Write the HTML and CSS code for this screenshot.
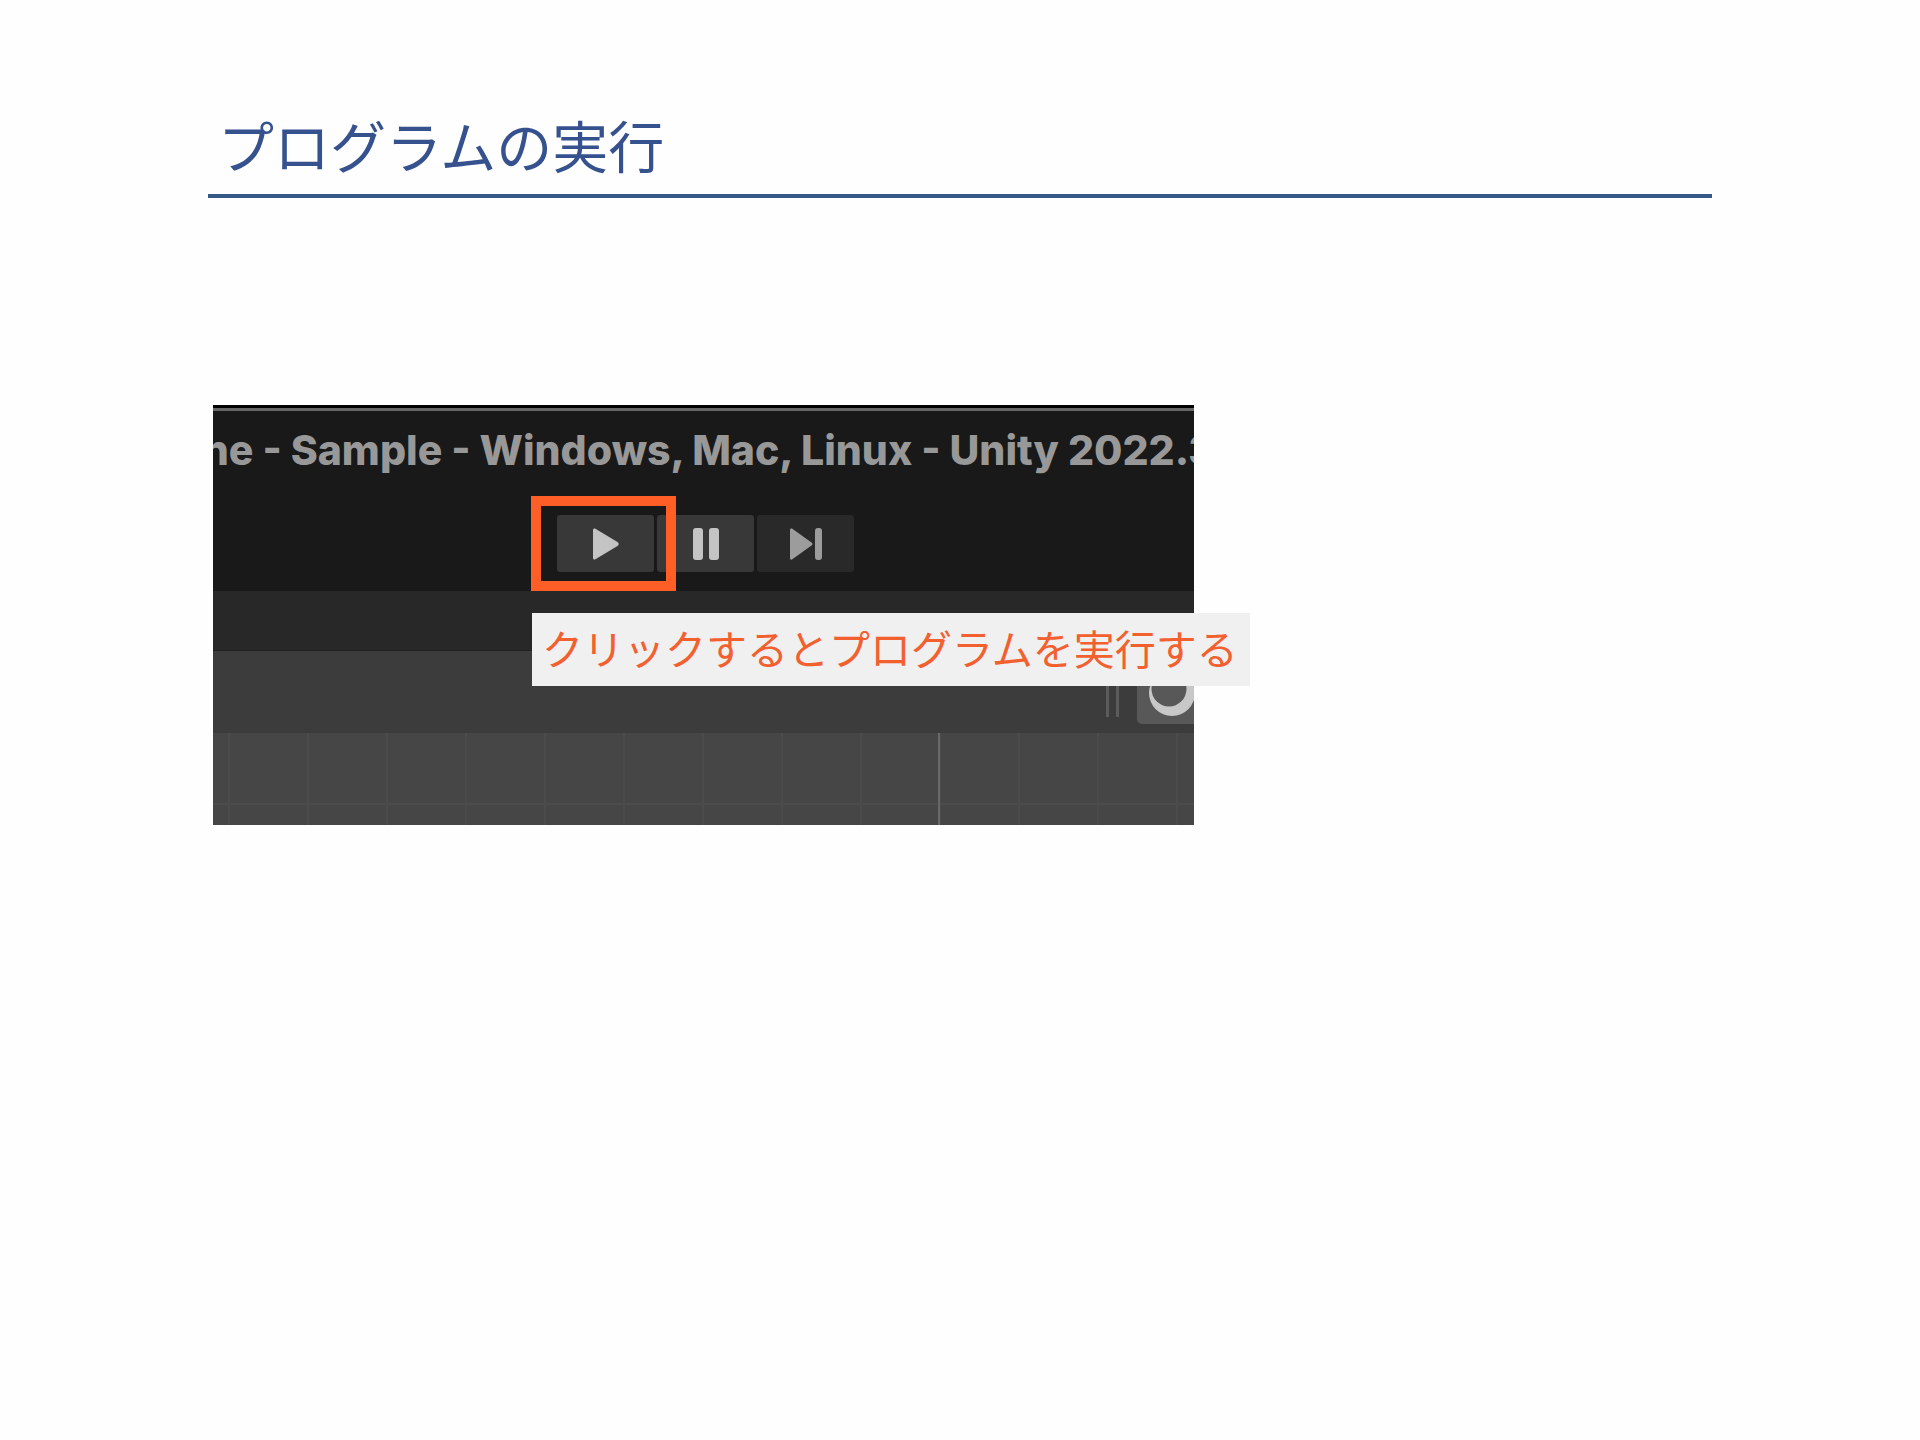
FILE: index.html
```html
<!DOCTYPE html>
<html lang="ja">
<head>
<meta charset="utf-8">
<meta name="viewport" content="width=device-width, initial-scale=1">
<title>プログラムの実行</title>
<link rel="stylesheet" href="styles.css">
</head>
<body>
<main class="slide">
  <h1 class="slide-title">プログラムの実行</h1>
  <figure class="shot">
    <div class="editor">
      <div class="window-title"><span>ne - Sample - Windows, Mac, Linux - Unity 2022.3</span></div>
      <div class="toolbar">
        <div class="play-wrap">
          <button class="tool" type="button" aria-label="Play">
            <svg width="28" height="32" viewBox="0 0 28 32"><path d="M1 2Q1 0 3 0.500L25.500 14Q28 16 25.500 18L3 31.500Q1 32 1 30Z" fill="#c4c4c4"/></svg>
          </button>
        </div>
        <button class="tool" type="button" aria-label="Pause">
          <svg width="26" height="32" viewBox="0 0 26 32"><rect width="10" height="32" rx="3" fill="#c4c4c4"/><rect x="16" width="10" height="32" rx="3" fill="#c4c4c4"/></svg>
        </button>
        <button class="tool tool-off" type="button" aria-label="Step">
          <svg width="32" height="32" viewBox="0 0 32 32"><path d="M0 1.500Q0 0 2 0.500L21.500 14.500Q23.500 16 21.500 17.500L2 31.500Q0 32 0 30.500Z" fill="#9c9c9c"/><rect x="25" width="7" height="32" rx="3" fill="#9c9c9c"/></svg>
        </button>
      </div>
      <div class="tabs"></div>
      <div class="scene-tools">
        <span class="grip"></span>
        <button class="shading" type="button" aria-label="Shading mode">
          <svg width="46" height="46" viewBox="0 0 46 46"><circle cx="23" cy="23" r="23" fill="#c8c8c8"/><circle cx="20" cy="19" r="17.500" fill="#585858"/></svg>
        </button>
      </div>
      <div class="grid"></div>
    </div>
    <figcaption class="note">クリックするとプログラムを実行する</figcaption>
  </figure>
</main>
</body>
</html>
```
FILE: styles.css
```css
* { box-sizing: border-box; }

body {
  margin: 0;
  background: #fefefe;
  font-family: "Noto Sans CJK JP", sans-serif;
}

.slide { padding: 104px 208px 80px; }

.slide-title {
  margin: 0;
  padding: 0 10px 10px;
  border-bottom: 4px solid #365889;
  color: #36528e;
  font-size: 56px;
  font-weight: 400;
  line-height: 80px;
}

.shot {
  position: relative;
  max-width: 981px;
  margin: 207px 5px 0;
}

.editor {
  overflow: hidden;
  border-top: 3px solid #000;
  background: #191919;
}

.window-title {
  display: flex;
  justify-content: center;
  padding-left: 11px;
  border-top: 3px solid #666;
  color: #989898;
  font-family: Inter, sans-serif;
  font-size: 41px;
  font-weight: 800;
  line-height: 78px;
  white-space: nowrap;
}

.toolbar {
  display: flex;
  justify-content: center;
  gap: 3px;
  padding: 26px 0 19px 4px;
}

.play-wrap { position: relative; }

.play-wrap::after {
  content: "";
  position: absolute;
  inset: -19px -22px -19px -26px;
  border: 10px solid #ff5e27;
  pointer-events: none;
}

.tool {
  display: flex;
  align-items: center;
  justify-content: center;
  width: 97px;
  height: 57px;
  padding: 0;
  border: 0;
  border-radius: 3px;
  background: #383838;
}

.tool-off { background: #292929; }

.tabs {
  height: 60px;
  border-bottom: 1px solid #202020;
  background: #282828;
}

.scene-tools {
  display: flex;
  align-items: center;
  justify-content: flex-end;
  gap: 18px;
  height: 82px;
  background: #3c3c3c;
}

.grip {
  width: 13px;
  height: 50px;
  border: solid #5c5c5c;
  border-width: 0 3px;
}

.shading {
  flex: none;
  width: 70px;
  height: 64px;
  margin-right: -13px;
  padding: 4px 0 0;
  border: 0;
  border-radius: 5px;
  background: #585858;
}

.grid {
  height: 92px;
  background:
    linear-gradient(#686868, #686868) 725px 0 / 2px 100% no-repeat,
    linear-gradient(#4c4c4c, #4c4c4c) 0 70px / 100% 2px no-repeat,
    repeating-linear-gradient(90deg, transparent 0 15px, #4b4b4b 15px 17px, transparent 17px 79px),
    #464646;
}

.note {
  position: absolute;
  top: 208px;
  left: 319px;
  padding: 0 12px 5px 10px;
  background: #f0f0f0;
  color: #f3602f;
  font-size: 41px;
  font-weight: 400;
  line-height: 68px;
  white-space: nowrap;
}
```
